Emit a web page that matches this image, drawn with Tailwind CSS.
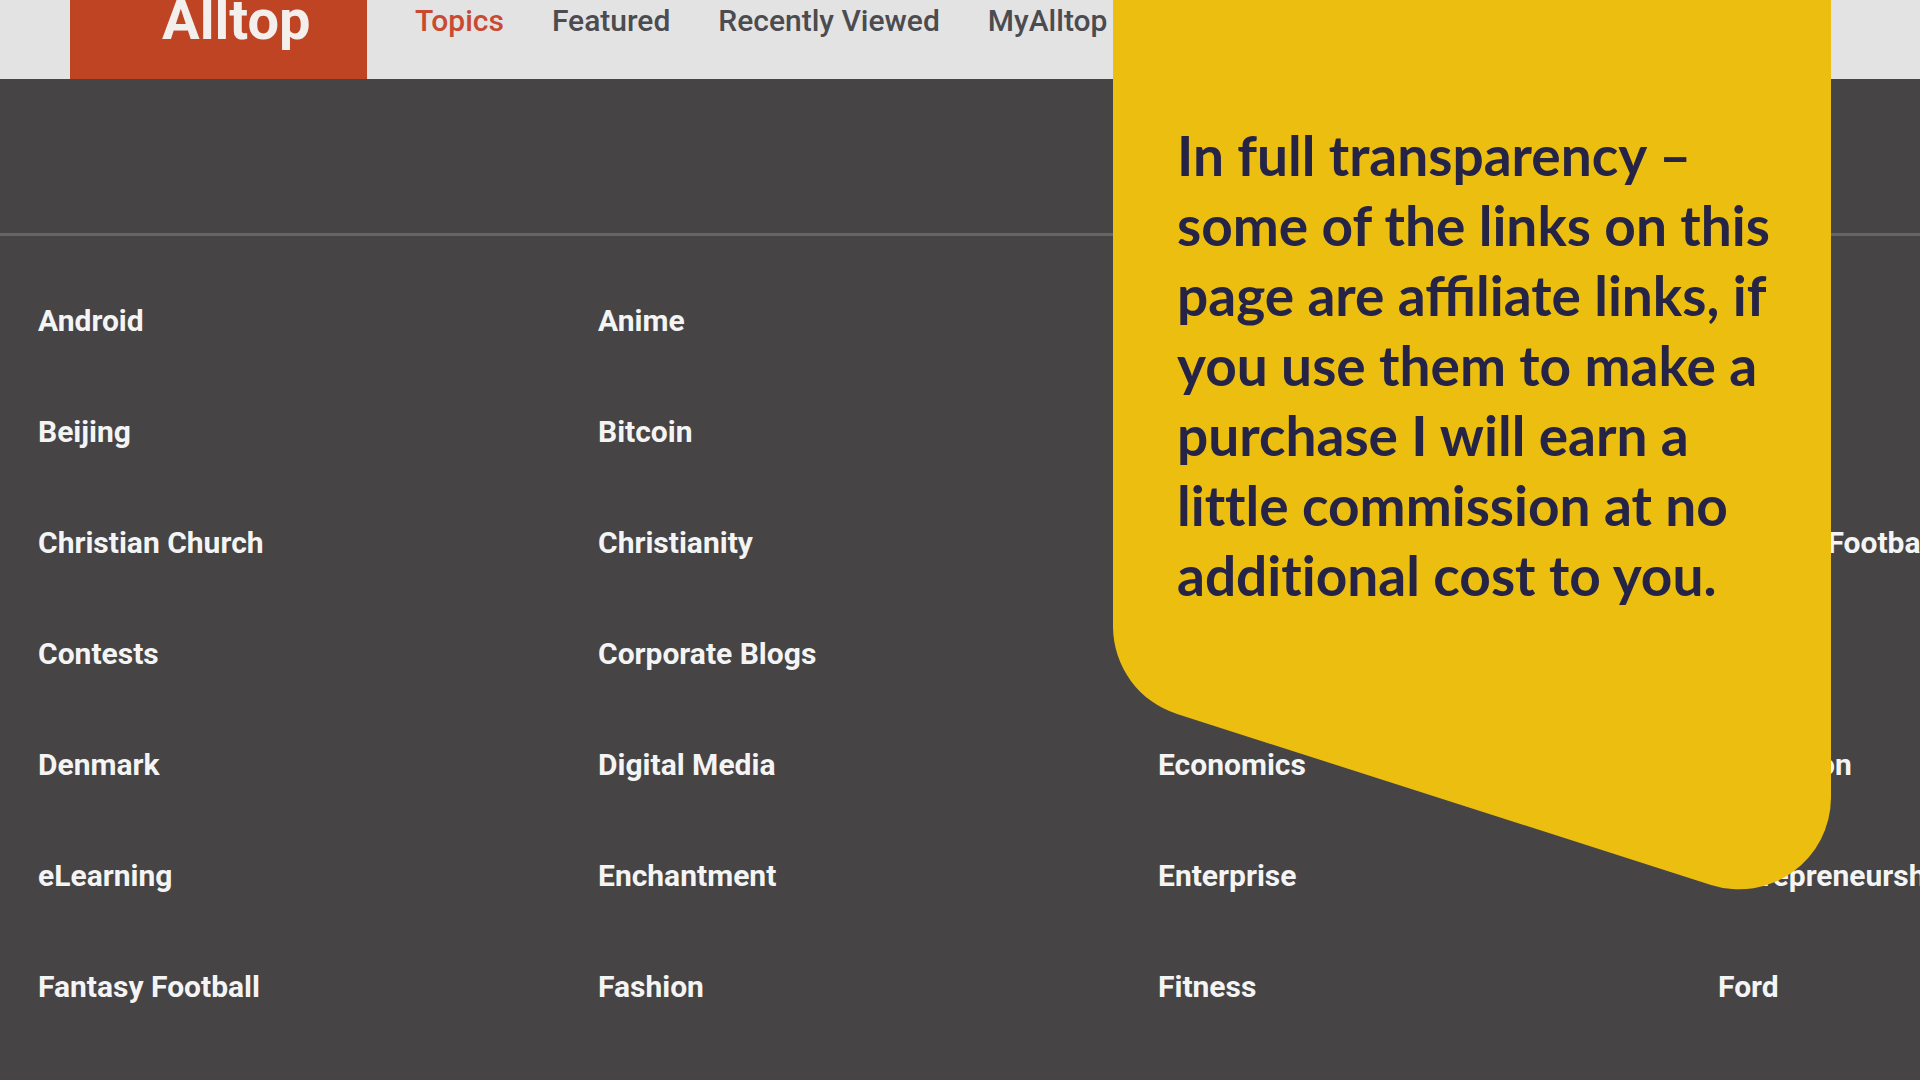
<!DOCTYPE html>
<html lang="en">

<head>
    <meta charset="utf-8">
    <meta name="viewport" content="width=device-width, initial-scale=1">
    <title>Topics | Alltop</title>
    <script src="https://cdn.jsdelivr.net/npm/@tailwindcss/browser@4"></script>
</head>

<body class="relative min-h-screen overflow-x-hidden bg-[#464445] font-['Roboto',sans-serif] text-[30px]">
    <header class="flex h-[79px] items-stretch overflow-hidden bg-[#e3e3e3] pl-[70px]">
        <a href="/" class="w-[297px] shrink-0 bg-[#bf4423] pl-[92px] text-[56px] leading-10 font-bold text-[#f3efec]">Alltop</a>

        <nav class="ml-12 flex gap-12 leading-[42px] font-medium whitespace-nowrap text-[#4b4b50]">
            <a href="/topics" class="text-[#c94a30]">Topics</a>
            <a href="/featured">Featured</a>
            <a href="/recent">Recently Viewed</a>
            <a href="/my">MyAlltop</a>
        </nav>
    </header>

    <main>
        <div class="h-[157px] border-b-3 border-[#666465]"></div>

        <ul class="grid auto-rows-[111px] grid-cols-[repeat(4,560px)] items-center overflow-hidden pt-[29px] pl-[38px] font-bold text-[#f4f4f4]">
            <li><a href="/android">Android</a></li>
            <li><a href="/anime">Anime</a></li>
            <li class="col-start-1"><a href="/beijing">Beijing</a></li>
            <li><a href="/bitcoin">Bitcoin</a></li>
            <li class="col-start-1"><a href="/christian-church">Christian Church</a></li>
            <li><a href="/christianity">Christianity</a></li>
            <li class="col-start-4"><a href="/college-football">College Football</a></li>
            <li class="col-start-1"><a href="/contests">Contests</a></li>
            <li><a href="/corporate-blogs">Corporate Blogs</a></li>
            <li class="col-start-1"><a href="/denmark">Denmark</a></li>
            <li><a href="/digital-media">Digital Media</a></li>
            <li><a href="/economics">Economics</a></li>
            <li><a href="/education">Education</a></li>
            <li><a href="/elearning">eLearning</a></li>
            <li><a href="/enchantment">Enchantment</a></li>
            <li><a href="/enterprise">Enterprise</a></li>
            <li><a href="/entrepreneurship">Entrepreneurship</a></li>
            <li><a href="/fantasy-football">Fantasy Football</a></li>
            <li><a href="/fashion">Fashion</a></li>
            <li><a href="/fitness">Fitness</a></li>
            <li><a href="/ford">Ford</a></li>
        </ul>
    </main>

    <!-- Disclosure tag hanging from the top edge -->
    <aside class="absolute top-0 right-[89px] w-[718px]">
        <svg class="block w-full" viewBox="0 0 718 890" fill="#ebbe10" aria-hidden="true">
            <path d="M0 0V627A92 92 0 0 0 64 714L598 885A92 92 0 0 0 718 798V0Z" />
        </svg>
        <p class="absolute inset-x-0 top-[120px] pl-16 font-['Lato',sans-serif] text-[55px] leading-[70px] font-bold text-[#262446] [font-variant-ligatures:none]">
            In full transparency –<br>
            some of the links on this<br>
            page are <span class="[font-variant-ligatures:normal]">affiliate</span> links, if<br>
            you use them to make a<br>
            purchase I will earn a<br>
            little commission at no<br>
            additional cost to you.
        </p>
    </aside>
</body>

</html>
